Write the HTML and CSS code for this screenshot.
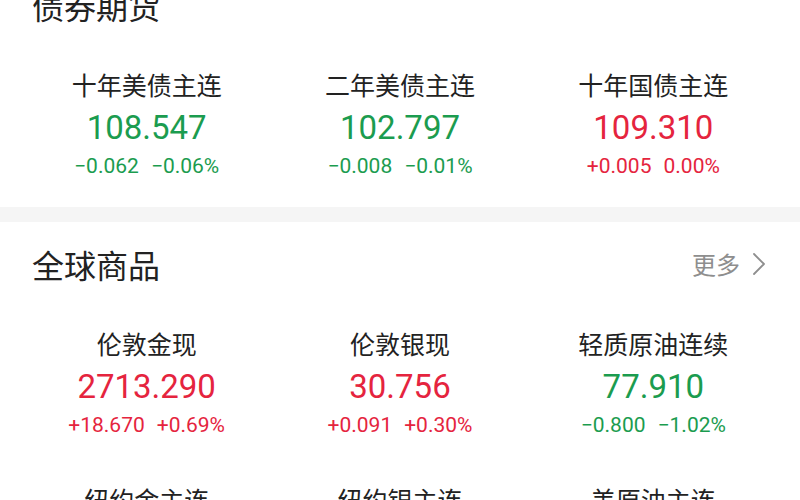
FILE: index.html
```html
<!DOCTYPE html>
<html lang="zh-CN">
<head>
<meta charset="utf-8">
<title>行情</title>
<link rel="stylesheet" href="styles.css">
</head>
<body>
<div class="page">
  <section class="section first">
    <div class="head">
      <h2 class="title">债券期货</h2>
    </div>
    <div class="grid">
      <div class="item down">
        <div class="name">十年美债主连</div>
        <div class="value">108.547</div>
        <div class="change"><span>−0.062</span><span>−0.06%</span></div>
      </div>
      <div class="item down">
        <div class="name">二年美债主连</div>
        <div class="value">102.797</div>
        <div class="change"><span>−0.008</span><span>−0.01%</span></div>
      </div>
      <div class="item up">
        <div class="name">十年国债主连</div>
        <div class="value">109.310</div>
        <div class="change"><span>+0.005</span><span>0.00%</span></div>
      </div>
    </div>
  </section>
  <div class="band"></div>
  <section class="section">
    <div class="head">
      <h2 class="title">全球商品</h2>
      <a class="more">更多<svg class="chev" width="14" height="24" viewBox="0 0 14 24"><polyline points="2,2 12,12 2,22" fill="none" stroke="#8e8e8e" stroke-width="1.8" stroke-linecap="round" stroke-linejoin="round"/></svg></a>
    </div>
    <div class="grid">
      <div class="item up">
        <div class="name">伦敦金现</div>
        <div class="value">2713.290</div>
        <div class="change"><span>+18.670</span><span>+0.69%</span></div>
      </div>
      <div class="item up">
        <div class="name">伦敦银现</div>
        <div class="value">30.756</div>
        <div class="change"><span>+0.091</span><span>+0.30%</span></div>
      </div>
      <div class="item down">
        <div class="name">轻质原油连续</div>
        <div class="value">77.910</div>
        <div class="change"><span>−0.800</span><span>−1.02%</span></div>
      </div>
      <div class="item">
        <div class="name">纽约金主连</div>
      </div>
      <div class="item">
        <div class="name">纽约银主连</div>
      </div>
      <div class="item">
        <div class="name">美原油主连</div>
      </div>
    </div>
  </section>
</div>
</body>
</html>
```
FILE: styles.css
```css
html, body {
  margin: 0;
  padding: 0;
  background: #ffffff;
}
body {
  font-family: "Noto Sans CJK SC", "Noto Sans", sans-serif;
  color: #222222;
  overflow: hidden;
}
.page {
  width: 800px;
  margin-top: -15px;
}
.section {
  padding: 22px 34px 28px 32px;
}
.section.first {
  padding-top: 0;
}
.head {
  display: flex;
  justify-content: space-between;
  align-items: center;
  height: 40px;
}
.title {
  margin: 0;
  font-size: 32px;
  line-height: 40px;
  font-weight: 400;
  color: #222222;
}
.more {
  display: flex;
  align-items: center;
  gap: 12px;
  font-size: 24px;
  line-height: 30px;
  color: #8e8e8e;
  text-decoration: none;
}
.chev {
  display: block;
}
.grid {
  display: grid;
  grid-template-columns: repeat(3, 1fr);
  row-gap: 46px;
  margin: 44px -14px 0 -12px;
}
.item {
  display: flex;
  flex-direction: column;
  align-items: center;
}
.name {
  font-size: 25px;
  line-height: 30px;
  color: #222222;
}
.value {
  margin-top: 9px;
  font-family: Roboto, "Liberation Sans", sans-serif;
  font-size: 33px;
  line-height: 40px;
}
.change {
  margin-top: 5px;
  display: flex;
  gap: 12px;
  font-family: Roboto, "Liberation Sans", sans-serif;
  font-size: 21px;
  line-height: 26px;
}
.up .value, .up .change {
  color: #e5243e;
}
.down .value, .down .change {
  color: #1b9c4f;
}
.band {
  height: 15px;
  background: #f5f5f5;
}
```
